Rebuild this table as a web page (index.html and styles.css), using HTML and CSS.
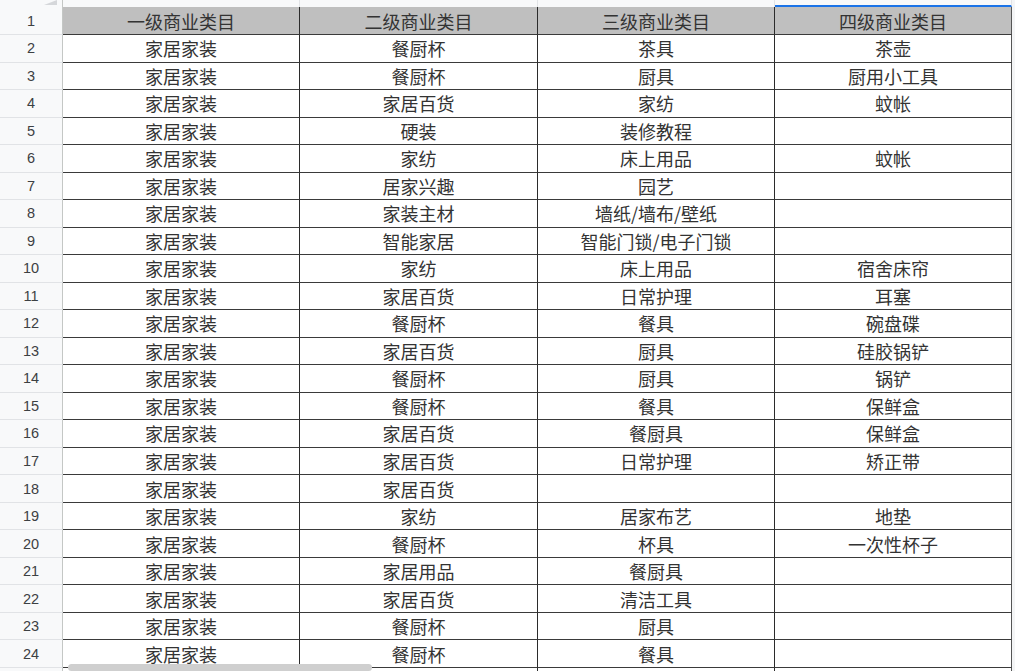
FILE: index.html
```html
<!DOCTYPE html>
<html lang="zh">
<head>
<meta charset="utf-8">
<title>Sheet</title>
<link rel="stylesheet" href="styles.css">
</head>
<body>
<div class="sheet">
  <div class="colhdr">
    <div class="corner"><span class="tri"></span></div>
    <div class="ch"></div>
    <div class="ch"></div>
    <div class="ch"></div>
    <div class="ch sel"></div>
    <div class="fill"></div>
  </div>
  <div class="rows">
    <div class="row head"><div class="rh">1</div><div class="c">一级商业类目</div><div class="c">二级商业类目</div><div class="c">三级商业类目</div><div class="c">四级商业类目</div><div class="fill"></div></div>
    <div class="row"><div class="rh">2</div><div class="c">家居家装</div><div class="c">餐厨杯</div><div class="c">茶具</div><div class="c">茶壶</div><div class="fill"></div></div>
    <div class="row"><div class="rh">3</div><div class="c">家居家装</div><div class="c">餐厨杯</div><div class="c">厨具</div><div class="c">厨用小工具</div><div class="fill"></div></div>
    <div class="row"><div class="rh">4</div><div class="c">家居家装</div><div class="c">家居百货</div><div class="c">家纺</div><div class="c">蚊帐</div><div class="fill"></div></div>
    <div class="row"><div class="rh">5</div><div class="c">家居家装</div><div class="c">硬装</div><div class="c">装修教程</div><div class="c"></div><div class="fill"></div></div>
    <div class="row"><div class="rh">6</div><div class="c">家居家装</div><div class="c">家纺</div><div class="c">床上用品</div><div class="c">蚊帐</div><div class="fill"></div></div>
    <div class="row"><div class="rh">7</div><div class="c">家居家装</div><div class="c">居家兴趣</div><div class="c">园艺</div><div class="c"></div><div class="fill"></div></div>
    <div class="row"><div class="rh">8</div><div class="c">家居家装</div><div class="c">家装主材</div><div class="c">墙纸/墙布/壁纸</div><div class="c"></div><div class="fill"></div></div>
    <div class="row"><div class="rh">9</div><div class="c">家居家装</div><div class="c">智能家居</div><div class="c">智能门锁/电子门锁</div><div class="c"></div><div class="fill"></div></div>
    <div class="row"><div class="rh">10</div><div class="c">家居家装</div><div class="c">家纺</div><div class="c">床上用品</div><div class="c">宿舍床帘</div><div class="fill"></div></div>
    <div class="row"><div class="rh">11</div><div class="c">家居家装</div><div class="c">家居百货</div><div class="c">日常护理</div><div class="c">耳塞</div><div class="fill"></div></div>
    <div class="row"><div class="rh">12</div><div class="c">家居家装</div><div class="c">餐厨杯</div><div class="c">餐具</div><div class="c">碗盘碟</div><div class="fill"></div></div>
    <div class="row"><div class="rh">13</div><div class="c">家居家装</div><div class="c">家居百货</div><div class="c">厨具</div><div class="c">硅胶锅铲</div><div class="fill"></div></div>
    <div class="row"><div class="rh">14</div><div class="c">家居家装</div><div class="c">餐厨杯</div><div class="c">厨具</div><div class="c">锅铲</div><div class="fill"></div></div>
    <div class="row"><div class="rh">15</div><div class="c">家居家装</div><div class="c">餐厨杯</div><div class="c">餐具</div><div class="c">保鲜盒</div><div class="fill"></div></div>
    <div class="row"><div class="rh">16</div><div class="c">家居家装</div><div class="c">家居百货</div><div class="c">餐厨具</div><div class="c">保鲜盒</div><div class="fill"></div></div>
    <div class="row"><div class="rh">17</div><div class="c">家居家装</div><div class="c">家居百货</div><div class="c">日常护理</div><div class="c">矫正带</div><div class="fill"></div></div>
    <div class="row"><div class="rh">18</div><div class="c">家居家装</div><div class="c">家居百货</div><div class="c"></div><div class="c"></div><div class="fill"></div></div>
    <div class="row"><div class="rh">19</div><div class="c">家居家装</div><div class="c">家纺</div><div class="c">居家布艺</div><div class="c">地垫</div><div class="fill"></div></div>
    <div class="row"><div class="rh">20</div><div class="c">家居家装</div><div class="c">餐厨杯</div><div class="c">杯具</div><div class="c">一次性杯子</div><div class="fill"></div></div>
    <div class="row"><div class="rh">21</div><div class="c">家居家装</div><div class="c">家居用品</div><div class="c">餐厨具</div><div class="c"></div><div class="fill"></div></div>
    <div class="row"><div class="rh">22</div><div class="c">家居家装</div><div class="c">家居百货</div><div class="c">清洁工具</div><div class="c"></div><div class="fill"></div></div>
    <div class="row"><div class="rh">23</div><div class="c">家居家装</div><div class="c">餐厨杯</div><div class="c">厨具</div><div class="c"></div><div class="fill"></div></div>
    <div class="row"><div class="rh">24</div><div class="c">家居家装</div><div class="c">餐厨杯</div><div class="c">餐具</div><div class="c"></div><div class="fill"></div></div>
    <div class="row"><div class="rh"></div><div class="c"></div><div class="c"></div><div class="c"></div><div class="c"></div><div class="fill"></div></div>
  </div>
  <div class="hscroll"></div>
</div>
</body>
</html>
```
FILE: styles.css
```css
html, body {
  margin: 0;
  padding: 0;
  background: #ffffff;
  overflow: hidden;
}
.sheet {
  position: relative;
  width: 1015px;
  height: 671px;
  overflow: hidden;
  font-family: "Noto Sans CJK SC", "Noto Sans", sans-serif;
}
.colhdr, .row {
  display: grid;
  grid-template-columns: 63px 237px 238px 237px 237px 3px;
}
.colhdr {
  height: 7px;
  background: #f8f9fa;
}
.corner {
  box-sizing: border-box;
  border-right: 1px solid #c4c7c5;
  display: flex;
  justify-content: flex-end;
  align-items: flex-end;
  padding: 0 5px 2px 0;
}
.tri {
  width: 0;
  height: 0;
  border-left: 13px solid transparent;
  border-bottom: 5px solid #d5d7da;
}
.ch {
  box-sizing: border-box;
  border-right: 1px solid #e1e3e6;
}
.ch.sel {
  border-bottom: 2px solid #1a73e8;
}
.fill {
  background: #f4f5f6;
}
.row {
  height: 27.52px;
}
.row.head {
  height: 28px;
}
.rh {
  box-sizing: border-box;
  background: #f8f9fa;
  border-right: 1px solid #c4c7c5;
  border-bottom: 1px solid #e1e3e6;
  display: flex;
  align-items: center;
  justify-content: center;
  font-family: "Liberation Sans", Arial, sans-serif;
  font-size: 14.5px;
  color: #3c4043;
}
.c {
  box-sizing: border-box;
  border-right: 1px solid #2b2b2b;
  border-bottom: 1px solid #3a3a3a;
  display: flex;
  align-items: center;
  justify-content: center;
  font-size: 18px;
  color: #333333;
  white-space: nowrap;
  overflow: hidden;
  line-height: 1;
}
.row.head .c {
  background: #bfbfbf;
}
.row .c:nth-child(5) {
  border-right-color: #555555;
}
.hscroll {
  position: absolute;
  left: 68px;
  top: 664px;
  width: 304px;
  height: 7px;
  border-radius: 4px;
  background: #cfcfcf;
}
```
